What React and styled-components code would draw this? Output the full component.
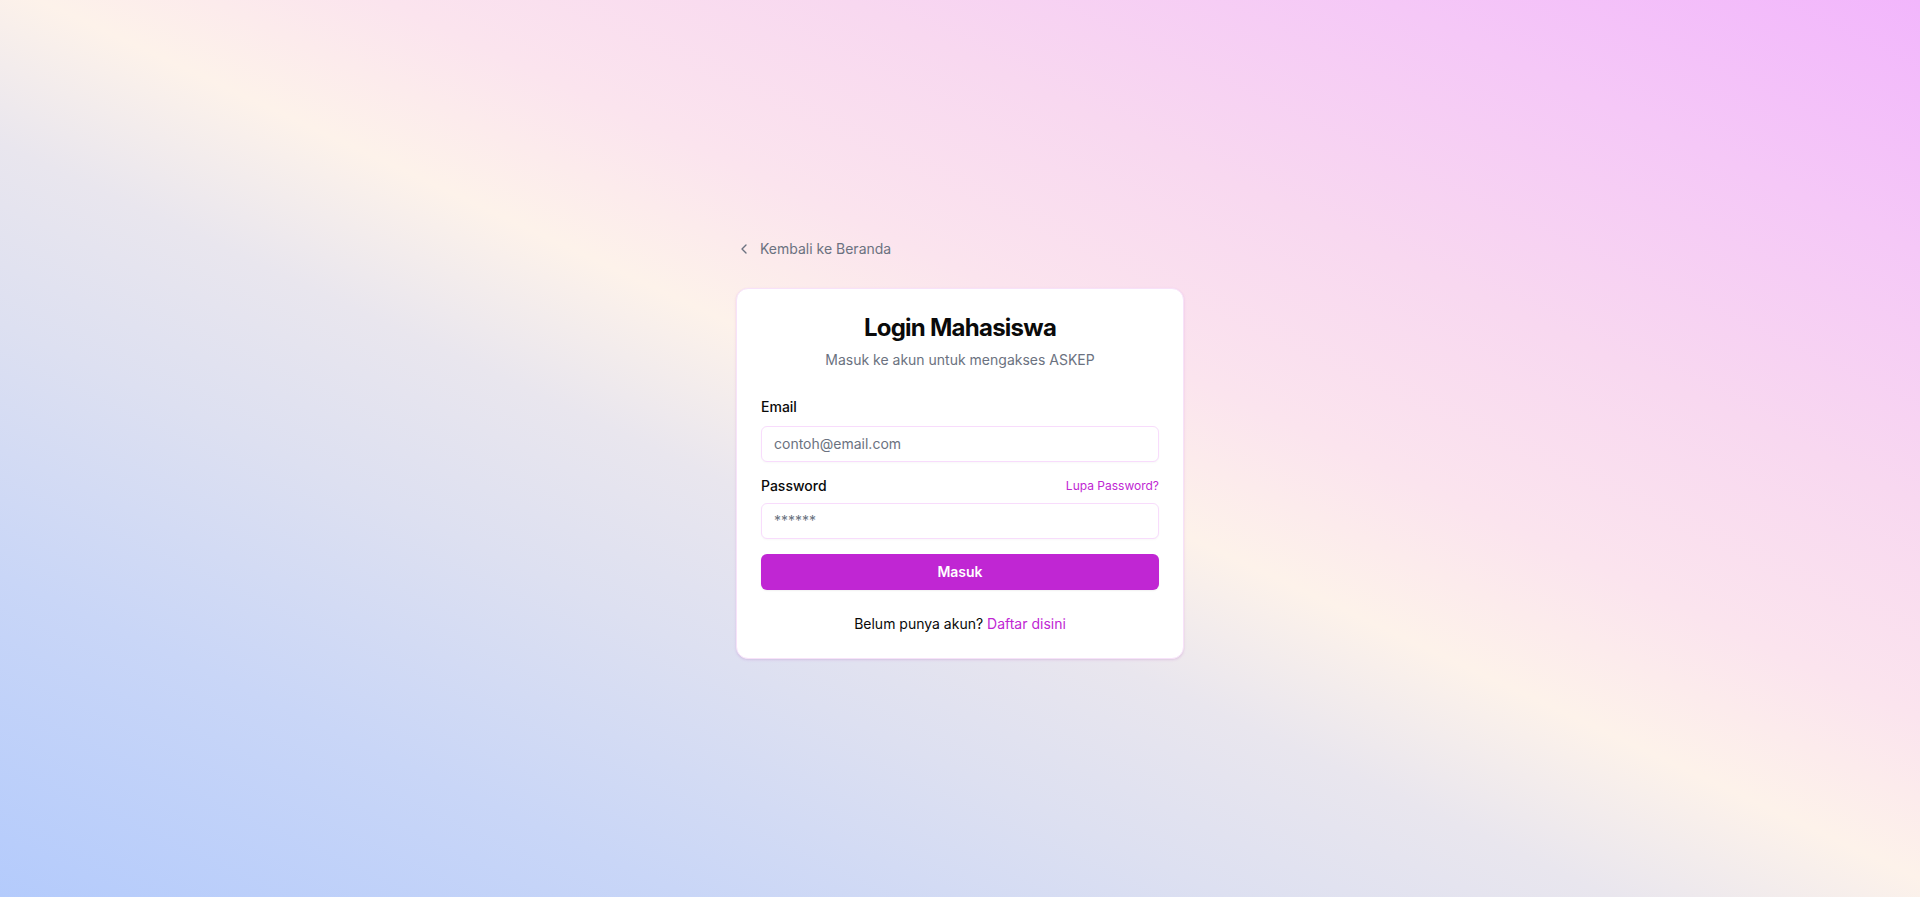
import styled, { createGlobalStyle } from "styled-components";
import { ChevronLeft } from "lucide-react";

const GlobalStyle = createGlobalStyle`
  * {
    box-sizing: border-box;
  }
  body {
    margin: 0;
    font-family: Inter, "Noto Sans", "Liberation Sans", sans-serif;
    -webkit-font-smoothing: antialiased;
  }
`;

const Page = styled.div`
  min-height: 897px;
  height: 100vh;
  display: flex;
  align-items: center;
  justify-content: center;
  background: linear-gradient(
    to top right,
    #b4cbfc 0%,
    #c9d6f7 18%,
    #dde0f1 32%,
    #e9e6ee 42%,
    #fdf2ea 51%,
    #fbe4ee 60%,
    #f8d8f0 72%,
    #f5c8f7 86%,
    #f2b6fc 100%
  );
`;

const Wrapper = styled.div`
  width: 448px;
  display: flex;
  flex-direction: column;
`;

const BackLink = styled.a`
  display: inline-flex;
  align-items: center;
  gap: 8px;
  font-size: 14px;
  line-height: 20px;
  color: #6b7280;
  text-decoration: none;
  margin-bottom: 29px;
  cursor: pointer;
`;

const Card = styled.div`
  background: #ffffff;
  border: 1px solid #f7e2f9;
  border-radius: 12px;
  box-shadow: 0 1px 3px rgba(192, 38, 211, 0.12), 0 1px 2px rgba(0, 0, 0, 0.04);
  padding: 23px 24px 24px;
`;

const Header = styled.div`
  display: flex;
  flex-direction: column;
  align-items: center;
  gap: 6px;
  margin-bottom: 27px;
`;

const Title = styled.h1`
  margin: 0;
  font-size: 24px;
  line-height: 32px;
  font-weight: 700;
  letter-spacing: -0.75px;
  color: #0a0a0a;
`;

const Subtitle = styled.p`
  margin: 0;
  font-size: 14px;
  line-height: 20px;
  color: #6b7280;
`;

const Field = styled.div`
  display: flex;
  flex-direction: column;
  gap: ${(p) => p.$gap || 9}px;
  margin-bottom: ${(p) => p.$mb || 14}px;
`;

const LabelRow = styled.div`
  display: flex;
  align-items: center;
  justify-content: space-between;
`;

const Label = styled.label`
  font-size: 14px;
  line-height: 20px;
  font-weight: 500;
  color: #0a0a0a;
`;

const SmallLink = styled.a`
  font-size: 12px;
  line-height: 16px;
  color: #c026d3;
  text-decoration: none;
  cursor: pointer;
`;

const Input = styled.input`
  width: 100%;
  height: 36px;
  padding: 0 12px;
  border: 1px solid #f8dcfc;
  border-radius: 6px;
  background: #ffffff;
  font-family: inherit;
  font-size: 14px;
  color: #0a0a0a;
  outline: none;
  box-shadow: 0 1px 2px rgba(0, 0, 0, 0.03);
  &::placeholder {
    color: #6b7280;
  }
`;

const SubmitButton = styled.button`
  width: 100%;
  height: 36px;
  border: none;
  border-radius: 6px;
  background: #c026d3;
  color: #ffffff;
  font-family: inherit;
  font-size: 14px;
  font-weight: 600;
  cursor: pointer;
  box-shadow: 0 1px 2px rgba(0, 0, 0, 0.06);
`;

const Footer = styled.p`
  margin: 24px 0 0;
  text-align: center;
  font-size: 14px;
  line-height: 20px;
  color: #0a0a0a;
  a {
    color: #c026d3;
    text-decoration: none;
  }
`;

const App = () => {
  return (
    <>
      <GlobalStyle />
      <Page>
        <Wrapper>
          <BackLink href="#">
            <ChevronLeft size={16} strokeWidth={2} />
            Kembali ke Beranda
          </BackLink>
          <Card>
            <Header>
              <Title>Login Mahasiswa</Title>
              <Subtitle>Masuk ke akun untuk mengakses ASKEP</Subtitle>
            </Header>
            <form onSubmit={(e) => e.preventDefault()}>
              <Field>
                <Label htmlFor="email">Email</Label>
                <Input id="email" type="email" placeholder="contoh@email.com" />
              </Field>
              <Field $gap={7} $mb={15}>
                <LabelRow>
                  <Label htmlFor="password">Password</Label>
                  <SmallLink href="#">Lupa Password?</SmallLink>
                </LabelRow>
                <Input id="password" type="password" placeholder="******" />
              </Field>
              <SubmitButton type="submit">Masuk</SubmitButton>
            </form>
            <Footer>
              Belum punya akun? <a href="#">Daftar disini</a>
            </Footer>
          </Card>
        </Wrapper>
      </Page>
    </>
  );
};

export default App;
